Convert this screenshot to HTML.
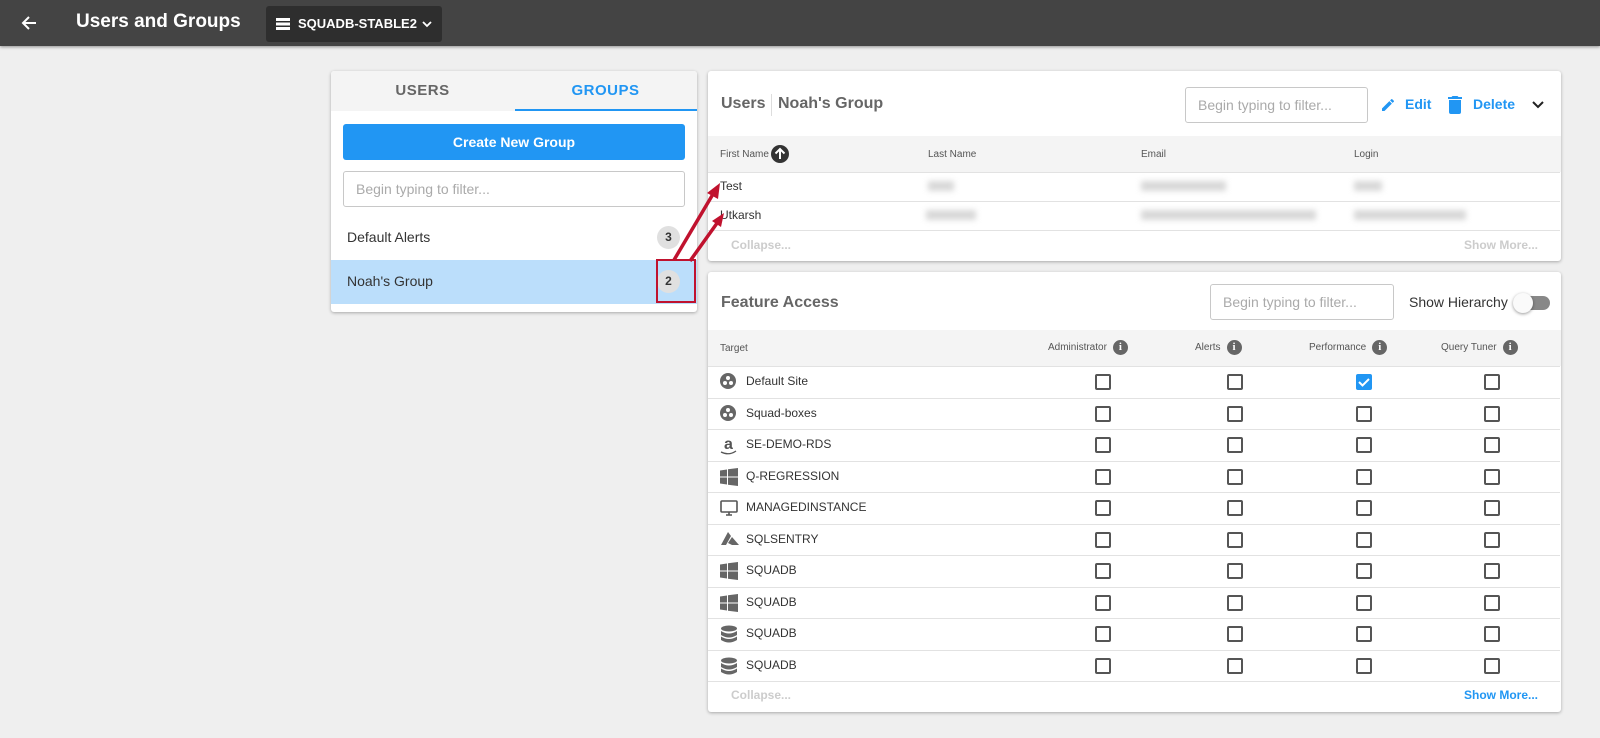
<!DOCTYPE html>
<html><head><style>
*{box-sizing:border-box;margin:0;padding:0}
body{width:1600px;height:738px;background:#efefef;font-family:"Liberation Sans",sans-serif;position:relative;overflow:hidden;color:#333}
.a{position:absolute}
.top{left:0;top:0;width:1600px;height:46px;background:#444;box-shadow:0 1px 3px rgba(0,0,0,.4)}
.card{background:#fff;box-shadow:0 1px 3px rgba(0,0,0,.3);border-radius:3px}
.inp{border:1px solid #c8c8c8;border-radius:3px;background:#fff;color:#aaa;font-size:14px;padding-left:12px;display:flex;align-items:center}
.th{font-size:10px;color:#555}
.row{border-top:1px solid #e2e2e2;width:852px;left:0}
.cb{width:16px;height:16px;border:2px solid #555;border-radius:2px}
.blur{background:#d8d8d8;filter:blur(3px);height:10px}
.info{display:inline-block;width:15px;height:15px;border-radius:50%;background:#666;color:#fff;font-size:11px;font-weight:bold;text-align:center;line-height:15px;vertical-align:middle;margin-left:6px;font-family:"Liberation Serif",serif}
.tn{font-size:12px;color:#333}
</style></head><body>
<div class="a top">
 <svg class="a" style="left:20px;top:14px" width="18" height="18" viewBox="0 0 18 18"><path d="M16 9H3M9 3L3 9l6 6" stroke="#fff" stroke-width="2" fill="none"/></svg>
 <div class="a" style="left:76px;top:11px;color:#fff;font-weight:bold;font-size:19px">Users and Groups</div>
 <div class="a" style="left:266px;top:6px;width:176px;height:36px;background:#2e2e2e;border-radius:3px">
  <svg class="a" style="left:10px;top:11px" width="14" height="14" viewBox="0 0 14 14"><rect x="0" y="1" width="14" height="3" fill="#fff"/><rect x="0" y="5.5" width="14" height="3" fill="#fff"/><rect x="0" y="10" width="14" height="3" fill="#fff"/></svg>
  <div class="a" style="left:32px;top:10px;color:#fff;font-size:13px;font-weight:bold">SQUADB-STABLE2</div>
  <svg class="a" style="left:156px;top:14px" width="10" height="8" viewBox="0 0 10 8"><path d="M1 2l4 4 4-4" stroke="#fff" stroke-width="1.8" fill="none"/></svg>
 </div>
</div>

<!-- left card -->
<div class="a card" style="left:331px;top:71px;width:366px;height:241px;overflow:hidden">
 <div class="a" style="left:0;top:0;width:366px;height:40px;background:#f4f4f4"></div>
 <div class="a" style="left:0;top:11px;width:183px;text-align:center;font-weight:bold;font-size:15px;color:#666;letter-spacing:.5px">USERS</div>
 <div class="a" style="left:183px;top:11px;width:183px;text-align:center;font-weight:bold;font-size:15px;color:#2196f3;letter-spacing:.5px">GROUPS</div>
 <div class="a" style="left:184px;top:38px;width:182px;height:2px;background:#2196f3"></div>
 <div class="a" style="left:12px;top:53px;width:342px;height:36px;background:#2196f3;border-radius:3px;color:#fff;font-weight:bold;font-size:14px;text-align:center;line-height:36px">Create New Group</div>
 <div class="a inp" style="left:12px;top:100px;width:342px;height:36px">Begin typing to filter...</div>
 <div class="a" style="left:16px;top:158px;font-size:14px">Default Alerts</div>
 <div class="a" style="left:326px;top:155px;width:23px;height:23px;border-radius:50%;background:#e0e0e0;font-size:12px;font-weight:bold;text-align:center;line-height:23px">3</div>
 <div class="a" style="left:0;top:189px;width:366px;height:44px;background:#bbdefb"></div>
 <div class="a" style="left:16px;top:202px;font-size:14px">Noah's Group</div>
 <div class="a" style="left:326px;top:199px;width:23px;height:23px;border-radius:50%;background:#e0e0e0;font-size:12px;font-weight:bold;text-align:center;line-height:23px">2</div>
</div>

<!-- users card -->
<div class="a card" style="left:708px;top:71px;width:853px;height:190px;overflow:hidden">
 <div class="a" style="left:13px;top:24px;font-size:16px;font-weight:bold;color:#666">Users</div>
 <div class="a" style="left:63px;top:23px;width:1px;height:22px;background:#ddd"></div>
 <div class="a" style="left:70px;top:24px;font-size:16px;font-weight:bold;color:#666">Noah's Group</div>
 <div class="a inp" style="left:477px;top:16px;width:183px;height:36px">Begin typing to filter...</div>
 <svg class="a" style="left:672px;top:26px" width="16" height="16" viewBox="0 0 24 24"><path d="M3 17.25V21h3.75L17.81 9.94l-3.75-3.75L3 17.25zM20.71 7.04a1 1 0 000-1.41l-2.34-2.34a1 1 0 00-1.41 0l-1.83 1.83 3.75 3.75 1.83-1.83z" fill="#2196f3"/></svg>
 <div class="a" style="left:697px;top:25px;font-size:14px;font-weight:bold;color:#2196f3">Edit</div>
 <svg class="a" style="left:740px;top:25px" width="14" height="18" viewBox="0 0 14 18"><path d="M1 16a2 2 0 002 2h8a2 2 0 002-2V4H1v12zM14 1h-3.5l-1-1h-5l-1 1H0v2h14V1z" fill="#2196f3"/></svg>
 <div class="a" style="left:765px;top:25px;font-size:14px;font-weight:bold;color:#2196f3">Delete</div>
 <svg class="a" style="left:824px;top:30px" width="12" height="8" viewBox="0 0 12 8"><path d="M1 1l5 5 5-5" stroke="#222" stroke-width="2" fill="none"/></svg>
 <div class="a" style="left:0;top:65px;width:853px;height:36px;background:#f4f4f4"></div>
 <div class="a th" style="left:12px;top:78px">First Name</div>
 <div class="a" style="left:63px;top:74px;width:18px;height:18px;border-radius:50%;background:#333"><svg width="18" height="18" viewBox="0 0 18 18"><path d="M9 14V4M4.5 8.5L9 4l4.5 4.5" stroke="#fff" stroke-width="2" fill="none"/></svg></div>
 <div class="a th" style="left:220px;top:78px">Last Name</div>
 <div class="a th" style="left:433px;top:78px">Email</div>
 <div class="a th" style="left:646px;top:78px">Login</div>
 <div class="a row" style="top:101px"></div>
 <div class="a tn" style="left:12px;top:108px">Test</div>
 <div class="a blur" style="left:220px;top:110px;width:26px"></div>
 <div class="a blur" style="left:433px;top:110px;width:85px"></div>
 <div class="a blur" style="left:646px;top:110px;width:28px"></div>
 <div class="a row" style="top:130px"></div>
 <div class="a tn" style="left:12px;top:137px">Utkarsh</div>
 <div class="a blur" style="left:218px;top:139px;width:50px"></div>
 <div class="a blur" style="left:433px;top:139px;width:175px"></div>
 <div class="a blur" style="left:646px;top:139px;width:112px"></div>
 <div class="a row" style="top:159px"></div>
 <div class="a" style="left:23px;top:167px;font-size:12px;font-weight:bold;color:#ccc">Collapse...</div>
 <div class="a" style="left:756px;top:167px;font-size:12px;font-weight:bold;color:#ccc">Show More...</div>
</div>

<!-- feature card -->
<div class="a card" style="left:708px;top:272px;width:853px;height:440px;overflow:hidden">
 <div class="a" style="left:13px;top:22px;font-size:16px;font-weight:bold;color:#666">Feature Access</div>
 <div class="a inp" style="left:502px;top:12px;width:184px;height:36px">Begin typing to filter...</div>
 <div class="a" style="left:701px;top:22px;font-size:14px">Show Hierarchy</div>
 <div class="a" style="left:814px;top:24px;width:28px;height:14px;border-radius:7px;background:#888"></div>
 <div class="a" style="left:805px;top:21px;width:20px;height:20px;border-radius:50%;background:#fafafa;box-shadow:0 1px 3px rgba(0,0,0,.4)"></div>
 <div class="a" style="left:0;top:58px;width:853px;height:36px;background:#f4f4f4"></div>
 <div class="a th" style="left:12px;top:71px">Target</div>
 <div class="a th" style="left:340px;top:68px">Administrator<span class="info">i</span></div>
 <div class="a th" style="left:487px;top:68px">Alerts<span class="info">i</span></div>
 <div class="a th" style="left:601px;top:68px">Performance<span class="info">i</span></div>
 <div class="a th" style="left:733px;top:68px">Query Tuner<span class="info">i</span></div>
 <div id="rows"></div>
 <div class="a row" style="top:409px"></div>
 <div class="a" style="left:23px;top:416px;font-size:12px;font-weight:bold;color:#ccc">Collapse...</div>
 <div class="a" style="left:756px;top:416px;font-size:12px;font-weight:bold;color:#2196f3">Show More...</div>
</div>

<!-- annotation -->
<div class="a" style="left:656px;top:259px;width:40px;height:44px;border:2px solid #c0122e"></div>
<svg class="a" style="left:660px;top:175px" width="70" height="90" viewBox="0 0 70 90"><g stroke="#c0122e" stroke-width="3.5" fill="none"><path d="M14 85L56 14"/><path d="M30 86L60 44"/></g><path d="M60 8L47 18L58 24Z" fill="#c0122e"/><path d="M64 38L52 46L61 52Z" fill="#c0122e"/></svg>

<script>
var names=["Default Site","Squad-boxes","SE-DEMO-RDS","Q-REGRESSION","MANAGEDINSTANCE","SQLSENTRY","SQUADB","SQUADB","SQUADB","SQUADB"];
var icons={site:'<svg width="16" height="16" viewBox="0 0 16 16"><circle cx="8" cy="8" r="8" fill="#666"/><circle cx="8" cy="5" r="2" fill="#fff"/><circle cx="5" cy="10" r="2" fill="#fff"/><circle cx="11" cy="10" r="2" fill="#fff"/></svg>',
amz:'<svg width="18" height="20" viewBox="0 0 18 20"><text x="4" y="13" font-size="16" font-weight="bold" fill="#555" font-family="Liberation Sans">a</text><path d="M1 16q8 4 15-1" stroke="#555" stroke-width="1.3" fill="none"/></svg>',
win:'<svg width="18" height="18" viewBox="0 0 18 18"><path d="M0 2.5l7-1v7H0zM8 1.3l10-1.3v8.5H8zM0 9.5h7v7l-7-1zM8 9.5h10V18l-10-1.3z" fill="#666"/></svg>',
mon:'<svg width="18" height="18" viewBox="0 0 18 18"><rect x="1" y="2" width="16" height="11" rx="1" stroke="#555" stroke-width="1.6" fill="none"/><path d="M6 16h6M9 13v3" stroke="#555" stroke-width="1.6"/></svg>',
az:'<svg width="20" height="16" viewBox="0 0 20 16"><path d="M8 1L1 14h5L11 5zM12 6l-4 6 4 2h7z" fill="#666"/></svg>',
db:'<svg width="18" height="18" viewBox="0 0 18 18"><ellipse cx="9" cy="3.5" rx="8" ry="3" fill="#666"/><path d="M1 6q8 5 16 0v4q-8 5-16 0zM1 11.5q8 5 16 0V15q-8 5-16 0z" fill="#666"/></svg>'};
var ic=["site","site","amz","win","mon","az","win","win","db","db"];
var h="";
for(var i=0;i<10;i++){var t=94+i*31.5;
h+='<div class="a row" style="top:'+t+'px"></div>';
h+='<div class="a" style="left:12px;top:'+(t+7)+'px">'+icons[ic[i]]+'</div>';
h+='<div class="a tn" style="left:38px;top:'+(t+8)+'px">'+names[i]+'</div>';
[387,519,648,776].forEach(function(x,j){
 if(i==0&&j==2)h+='<div class="a" style="left:'+x+'px;top:'+(t+8)+'px;width:16px;height:16px;background:#2196f3;border-radius:2px"><svg width="16" height="16" viewBox="0 0 16 16"><path d="M3 8l3.5 3.5L13 5" stroke="#fff" stroke-width="2" fill="none"/></svg></div>';
 else h+='<div class="a cb" style="left:'+x+'px;top:'+(t+8)+'px"></div>';});
}
document.getElementById("rows").innerHTML=h;
</script>
</body></html>
